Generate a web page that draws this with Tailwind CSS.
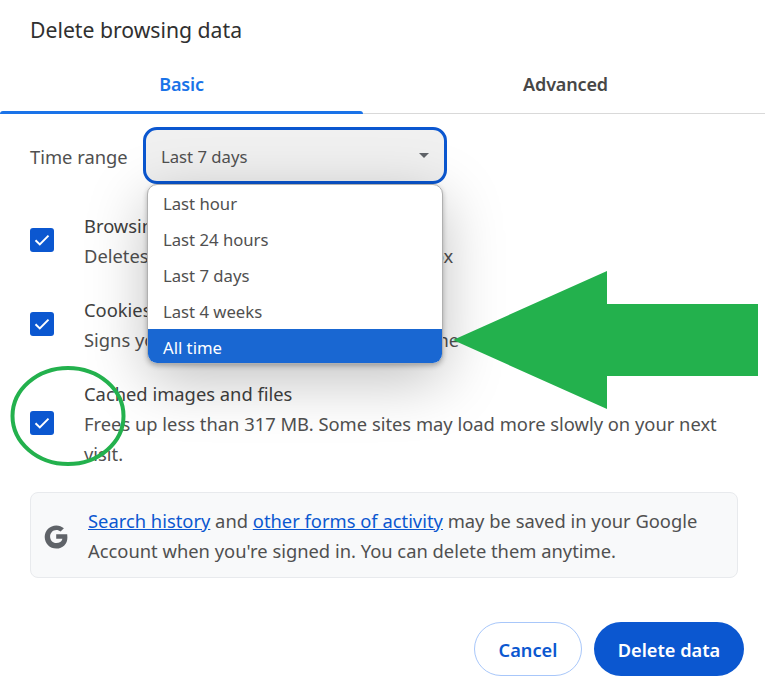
<!DOCTYPE html>
<html lang="en">
<head>
    <meta charset="UTF-8">
    <title>Delete browsing data</title>
    <script src="https://cdn.jsdelivr.net/npm/@tailwindcss/browser@4"></script>
</head>
<body class="bg-white">
<div class="relative w-[765px] h-[691px] overflow-hidden bg-white text-[#505050] font-['Noto_Sans',sans-serif] text-[18.35px] leading-[30px]">

    <!-- Title -->
    <h1 class="h-[60px] pl-[30px] pt-[15px] text-[21.2px] leading-[30px] text-[#303030]">Delete browsing data</h1>

    <!-- Tabs -->
    <div class="flex h-[54px] border-b border-[#d9d9d9] text-[18px] tracking-[-0.15px]">
        <div class="relative flex w-[363px] justify-center pt-[9px] font-semibold text-[#1a73e8]">
            Basic
            <div class="absolute left-0 right-0 -bottom-px h-[3px] rounded-t-[3px] bg-[#1a73e8]"></div>
        </div>
        <div class="flex flex-1 justify-center pt-[9px] pl-[3px] font-semibold text-[#474747]">Advanced</div>
    </div>

    <!-- Time range -->
    <div class="flex items-center h-[57px] mt-[13px] pl-[30px]">
        <span class="w-[113px] pt-[2px]">Time range</span>
        <div class="flex items-center justify-between w-[304px] h-[57px] pl-[15px] pr-[15px] rounded-[14px] border-[3px] border-[#0b57d0] bg-[#f0f0f0] text-[16.7px]">
            <span class="pt-[3px]">Last 7 days</span>
            <svg width="10" height="5" viewBox="0 0 12 6"><path d="M0 0h12L6 6z" fill="#5f6368"/></svg>
        </div>
    </div>

    <!-- Checkbox rows -->
    <div class="flex flex-col gap-[24px] mt-[27px] pl-[30px] pr-[40px]">
        <div class="flex items-center gap-[30px]">
            <div class="flex items-center justify-center shrink-0 w-[24px] h-[24px] mb-[2px] rounded-[3px] bg-[#0b57d0]">
                <svg width="16" height="12" viewBox="0 0 16 12" fill="none"><path d="M1.5 6.2l4.3 4.2L14.5 1.6" stroke="#fff" stroke-width="2"/></svg>
            </div>
            <div>
                <p class="text-[#404040]">Browsing history</p>
                <p class="whitespace-nowrap">Deletes history, including in the search box</p>
            </div>
        </div>
        <div class="flex items-center gap-[30px]">
            <div class="flex items-center justify-center shrink-0 w-[24px] h-[24px] mb-[2px] rounded-[3px] bg-[#0b57d0]">
                <svg width="16" height="12" viewBox="0 0 16 12" fill="none"><path d="M1.5 6.2l4.3 4.2L14.5 1.6" stroke="#fff" stroke-width="2"/></svg>
            </div>
            <div>
                <p class="text-[#404040]">Cookies and other site data</p>
                <p class="whitespace-nowrap">Signs you out of most sites or on the phone</p>
            </div>
        </div>
        <div class="flex items-center gap-[30px]">
            <div class="flex items-center justify-center shrink-0 w-[24px] h-[24px] mb-[2px] rounded-[3px] bg-[#0b57d0]">
                <svg width="16" height="12" viewBox="0 0 16 12" fill="none"><path d="M1.5 6.2l4.3 4.2L14.5 1.6" stroke="#fff" stroke-width="2"/></svg>
            </div>
            <div>
                <p class="text-[#404040]">Cached images and files</p>
                <p>Frees up less than 317 MB. Some sites may load more slowly on your next visit.</p>
            </div>
        </div>
    </div>

    <!-- Google notice -->
    <div class="flex items-center h-[86px] mt-[23px] mx-[30px] w-[708px] rounded-[8px] border border-[#e8eaed] bg-[#f8f9fa]">
        <svg width="24" height="25" viewBox="0 0 24 24" class="ml-[13px] mt-[2px] shrink-0">
            <path fill="#5f6368" d="M12.2 9.8v4.4h6.2c-.3 1.500-1.100 2.600-2.200 3.400-1 .7-2.300 1-3.900 1-3.500 0-6.200-2.900-6.200-6.600s2.700-6.600 6.200-6.600c1.700 0 3.100.6 4.300 1.700l3.300-3.300C17.800 1.900 15.300.9 12.300.9 5.900.9.700 6 .7 12.500s5.200 11.600 11.600 11.600c3.300 0 5.900-1.100 8-3.100 2.100-2 3.100-5 3.100-8 0-.9-.1-2-.2-3.200z"/>
        </svg>
        <p class="ml-[20px] w-[640px] pt-[1px]"><a class="text-[#0b57d0] underline">Search history</a> and <a class="text-[#0b57d0] underline">other forms of activity</a> may be saved in your Google Account when you're signed in. You can delete them anytime.</p>
    </div>

    <!-- Buttons -->
    <div class="flex justify-end gap-[12px] mt-[44px] pr-[21px] text-[18.2px]">
        <button class="w-[108px] h-[54px] pt-[2px] rounded-full border border-[#a8c7fa] bg-white font-semibold text-[#0b57d0]">Cancel</button>
        <button class="w-[150px] h-[54px] pt-[2px] rounded-full bg-[#0b57d0] font-semibold text-white">Delete data</button>
    </div>

    <!-- Open dropdown -->
    <ul class="absolute left-[147px] top-[184px] w-[296px] h-[180px] overflow-hidden rounded-[10px] border border-[#b0b0b0] bg-white text-[16.7px] shadow-[0_2px_5px_rgba(0,0,0,0.25),0_16px_60px_rgba(0,0,0,0.25)]">
        <li class="flex items-center h-[36px] pl-[15px] pt-[2px]">Last hour</li>
        <li class="flex items-center h-[36px] pl-[15px] pt-[2px]">Last 24 hours</li>
        <li class="flex items-center h-[36px] pl-[15px] pt-[2px]">Last 7 days</li>
        <li class="flex items-center h-[36px] pl-[15px] pt-[2px]">Last 4 weeks</li>
        <li class="flex items-center h-[36px] pl-[15px] pt-[2px] bg-[#1967d2] text-white">All time</li>
    </ul>

    <!-- Hand-drawn annotations -->
    <svg class="absolute left-0 top-0" width="765" height="691" viewBox="0 0 765 691" fill="none">
        <path d="M607 271v33h151v72H607v33L453 340z" fill="#23b14d"/>
        <ellipse cx="68" cy="416" rx="55.500" ry="48" stroke="#23b14d" stroke-width="4"/>
    </svg>
</div>
</body>
</html>
